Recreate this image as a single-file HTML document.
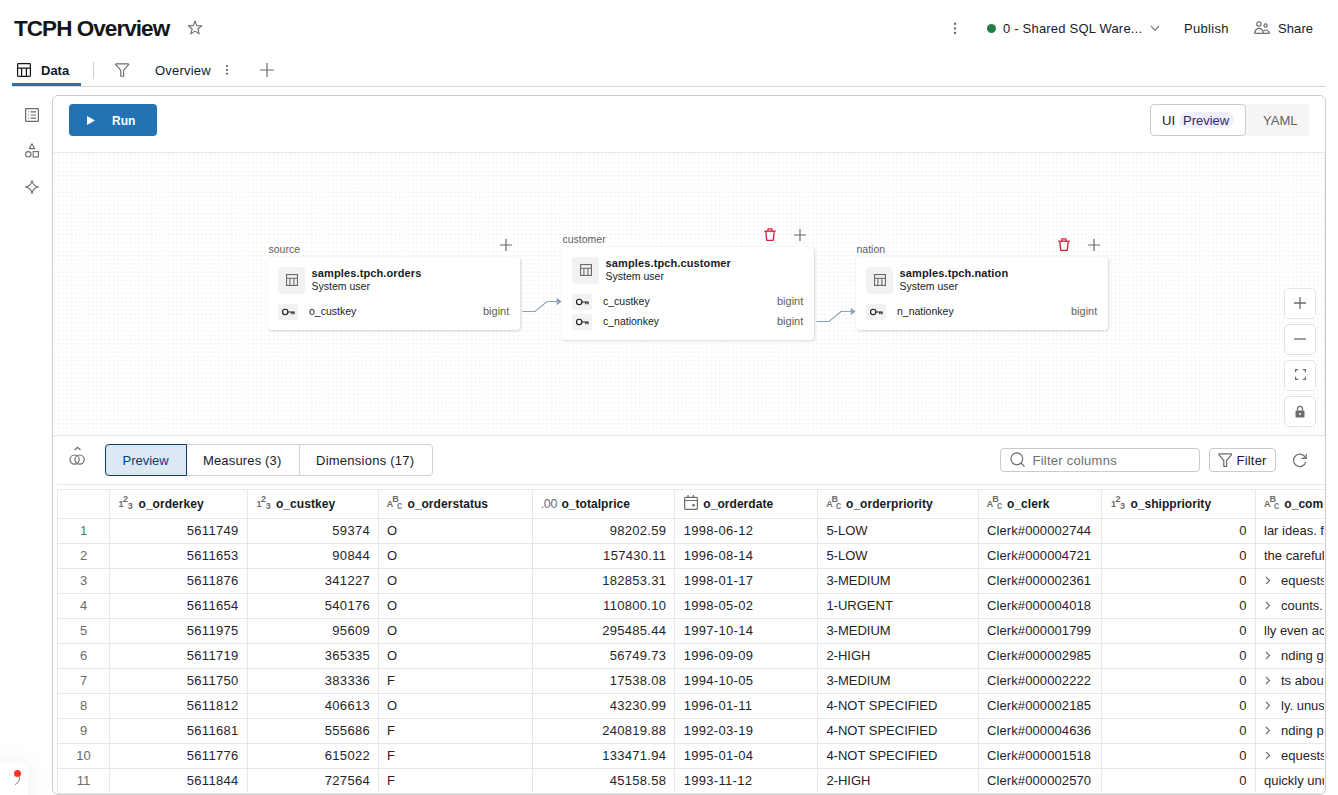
<!DOCTYPE html>
<html><head><meta charset="utf-8">
<style>
*{box-sizing:border-box;margin:0;padding:0}
html,body{width:1338px;height:795px;overflow:hidden;background:#fff;font-family:"Liberation Sans",sans-serif;color:#161b1f}
.a{position:absolute}
.t{position:absolute;white-space:nowrap;line-height:1}
svg{position:absolute;overflow:visible}
.node{position:absolute;width:252px;background:#fff;border-radius:3px;box-shadow:1px 1px 3px rgba(0,0,0,0.16),0 0 1px rgba(0,0,0,0.10)}
.ibox{position:absolute;background:#f1f2f3;border-radius:4px}
.zb{position:absolute;left:1284px;width:32px;height:31px;background:#fff;border:1px solid #e4e4e4;border-radius:5px}
</style></head><body>
<div class="t" style="left:14.00px;top:17.55px;font-size:22.5px;font-weight:bold;color:#161616;letter-spacing:-0.95px">TCPH Overview</div>
<svg style="left:187px;top:20px" width="16" height="15" viewBox="0 0 16 15"><path d="M8.00 1.00 L9.76 5.67 L14.75 5.91 L10.85 9.03 L12.17 13.84 L8.00 11.10 L3.83 13.84 L5.15 9.03 L1.25 5.91 L6.24 5.67 Z" fill="none" stroke="#6b6b6b" stroke-width="1.1" stroke-linejoin="round"/></svg>
<svg style="left:953px;top:22px" width="4" height="13"><circle cx="2" cy="1.8" r="1.2" fill="#6b6b6b"/><circle cx="2" cy="6.4" r="1.2" fill="#6b6b6b"/><circle cx="2" cy="11" r="1.2" fill="#6b6b6b"/></svg>
<div class="a" style="left:986.5px;top:23.5px;width:9px;height:9px;border-radius:50%;background:#277c43"></div>
<div class="t" style="left:1003.00px;top:22.00px;font-size:13px;font-weight:normal;color:#161b1f;letter-spacing:0.2px">0 - Shared SQL Ware...</div>
<svg style="left:1150px;top:25px" width="10" height="7" viewBox="0 0 10 7"><path d="M1 1.2 L5 5.2 L9 1.2" fill="none" stroke="#6b6b6b" stroke-width="1.1"/></svg>
<div class="t" style="left:1184.00px;top:22.00px;font-size:13px;font-weight:normal;color:#161b1f;letter-spacing:0.3px">Publish</div>
<svg style="left:1254px;top:21px" width="16" height="14" viewBox="0 0 16 14"><circle cx="4.9" cy="2.9" r="2.2" fill="none" stroke="#6b6b6b" stroke-width="1.15"/><circle cx="11.6" cy="4.5" r="1.6" fill="none" stroke="#6b6b6b" stroke-width="1.15"/><path d="M1.2 12.3 Q0.3 12.3 0.7 11.2 C1.5 8.9 3.2 7.4 5 7.4 C6.8 7.4 8.5 8.9 9.3 11.2 Q9.7 12.3 8.8 12.3 Z" fill="none" stroke="#6b6b6b" stroke-width="1.15" stroke-linejoin="round"/><path d="M9.4 12.3 H14.8 Q15.7 12.3 15.3 11.4 C14.6 9.9 13.4 9 12 9 C11 9 10.2 9.4 9.5 10.1" fill="none" stroke="#6b6b6b" stroke-width="1.15" stroke-linejoin="round"/></svg>
<div class="t" style="left:1278.00px;top:22.00px;font-size:13px;font-weight:normal;color:#161b1f;letter-spacing:0.1px">Share</div>
<svg style="left:17px;top:63px" width="14" height="14" viewBox="0 0 14 14"><rect x="0.6" y="0.6" width="12.8" height="12.8" rx="0.8" fill="none" stroke="#161616" stroke-width="1.2"/><path d="M0.6 5.1 H13.4 M4.6 5.1 V13.4 M9.4 5.1 V13.4" stroke="#161616" stroke-width="1.25"/></svg>
<div class="t" style="left:41.00px;top:64.00px;font-size:13px;font-weight:bold;color:#161616;">Data</div>
<div class="a" style="left:12px;top:83px;width:69px;height:3px;background:#2272b4"></div>
<div class="a" style="left:12px;top:86px;width:1314px;height:1px;background:#d6d6d6"></div>
<div class="a" style="left:93px;top:62px;width:1px;height:17px;background:#cfcfcf"></div>
<svg style="left:115px;top:63px" width="15" height="14" viewBox="0 0 15 14"><path d="M1.2 0.9 H13 Q14 0.9 13.4 1.9 L8.6 7.3 V13.2 H5.8 V7.3 L1 1.9 Q0.3 0.9 1.2 0.9 Z" fill="none" stroke="#6b6b6b" stroke-width="1.15" stroke-linejoin="round"/></svg>
<div class="t" style="left:155.00px;top:64.00px;font-size:13px;font-weight:normal;color:#161b1f;letter-spacing:0.2px">Overview</div>
<svg style="left:225px;top:64px" width="4" height="12"><circle cx="2" cy="2" r="1.05" fill="#5f5f5f"/><circle cx="2" cy="5.9" r="1.05" fill="#5f5f5f"/><circle cx="2" cy="9.8" r="1.05" fill="#5f5f5f"/></svg>
<svg style="left:260px;top:63px" width="14" height="14" viewBox="0 0 14 14"><path d="M7 0 V14 M0 7 H14" stroke="#6b6b6b" stroke-width="1.2"/></svg>
<svg style="left:25px;top:108px" width="14" height="14" viewBox="0 0 14 14"><rect x="0.6" y="0.6" width="12.8" height="12.8" rx="0.6" fill="none" stroke="#6b6b6b" stroke-width="1.2"/><path d="M5.5 3.8 H11 M5.5 7 H11 M5.5 10.2 H11" stroke="#6b6b6b" stroke-width="1.2"/><path d="M3 3.8 H3.8 M3 7 H3.8 M3 10.2 H3.8" stroke="#6b6b6b" stroke-width="1"/></svg>
<svg style="left:25px;top:143px" width="14" height="15" viewBox="0 0 14 15"><path d="M7 0.8 L9.7 5.6 H4.3 Z" fill="none" stroke="#6b6b6b" stroke-width="1.1" stroke-linejoin="round"/><circle cx="3.3" cy="11.3" r="2.7" fill="none" stroke="#6b6b6b" stroke-width="1.1"/><rect x="8.2" y="8.6" width="5.2" height="5.4" fill="none" stroke="#6b6b6b" stroke-width="1.1"/></svg>
<svg style="left:25.2px;top:180px" width="14" height="14" viewBox="0 0 14 14"><path d="M7 0.6 Q8 6 13.4 7 Q8 8 7 13.4 Q6 8 0.6 7 Q6 6 7 0.6 Z" fill="none" stroke="#6b6b6b" stroke-width="1.1" stroke-linejoin="round"/></svg>
<div class="a" style="left:52px;top:95px;width:1274px;height:700px;border:1px solid #cdcdcd;border-radius:6px"></div>
<div class="a" style="left:69px;top:104px;width:88px;height:32px;background:#2272b4;border-radius:4px"></div>
<svg style="left:87px;top:116px" width="8" height="9" viewBox="0 0 8 9"><path d="M0 0 L8 4.5 L0 9 Z" fill="#fff"/></svg>
<div class="t" style="left:112.00px;top:115.24px;font-size:12px;font-weight:bold;color:#fff;">Run</div>
<div class="a" style="left:1150px;top:104px;width:159px;height:32px;background:#f5f5f5;border-radius:4px"></div>
<div class="a" style="left:1150px;top:104px;width:96px;height:32px;background:#fff;border:1px solid #cbcbcb;border-radius:4px"></div>
<div class="t" style="left:1162.00px;top:114.00px;font-size:13px;font-weight:normal;color:#161b1f;">UI</div>
<div class="a" style="left:1179px;top:112px;width:55px;height:16px;background:#f2effc;border-radius:8px"></div>
<div class="t" style="left:1183.00px;top:114.00px;font-size:13px;font-weight:normal;color:#2f2a6b;">Preview</div>
<div class="t" style="left:1263.00px;top:114.00px;font-size:13px;font-weight:normal;color:#626262;">YAML</div>
<div class="a" style="left:53px;top:152px;width:1272px;height:1px;background:#e3e8ed"></div>
<svg style="left:53px;top:153px" width="1271" height="282"><defs><pattern id="dp" x="1.17" y="1.08" width="4.21" height="4.205" patternUnits="userSpaceOnUse"><rect x="0" y="0" width="1" height="1" fill="#e3e3e3"/></pattern></defs><rect width="1271" height="282" fill="url(#dp)"/></svg>
<div class="a" style="left:53px;top:435px;width:1272px;height:1px;background:#e3e8ed"></div>
<div class="a" style="left:1324px;top:153px;width:1px;height:282px;background:#edf0f3"></div>
<div class="t" style="left:268.50px;top:243.61px;font-size:10.5px;font-weight:normal;color:#5e5e5e;">source</div>
<svg style="left:500px;top:239px" width="12" height="12" viewBox="0 0 12 12"><path d="M6 0 V12 M0 6 H12" stroke="#6b6b6b" stroke-width="1.2"/></svg>
<div class="node" style="left:268px;top:257px;height:73px"></div>
<div class="a" style="left:278px;top:267px;width:27px;height:26.5px;background:#f2f2f4;border-radius:4px"></div>
<svg style="left:286px;top:274px" width="12" height="12" viewBox="0 0 12 12"><rect x="0.55" y="0.55" width="10.9" height="10.9" fill="none" stroke="#6b6b6b" stroke-width="1.1"/><path d="M0.55 4.3 H11.45 M3.9 4.3 V11.45 M7.9 4.3 V11.45" stroke="#6b6b6b" stroke-width="1.1"/></svg>
<div class="t" style="left:311.60px;top:267.69px;font-size:11px;font-weight:bold;color:#161b1f;letter-spacing:0.12px">samples.tpch.orders</div>
<div class="t" style="left:311.60px;top:281.11px;font-size:10.5px;font-weight:normal;color:#161b1f;">System user</div>
<div class="a" style="left:278.2px;top:304px;width:19.8px;height:16px;background:#f2f2f4;border-radius:3px"></div>
<svg style="left:281.5px;top:308px" width="14" height="8" viewBox="0 0 14 8"><circle cx="3.2" cy="4" r="2.7" fill="none" stroke="#1f1f1f" stroke-width="1.1"/><path d="M5.9 4 H12.6 M9.9 4 V6.3 M12 4 V6.3" stroke="#1f1f1f" stroke-width="1.2"/></svg>
<div class="t" style="left:309.00px;top:306.11px;font-size:10.5px;font-weight:normal;color:#161b1f;">o_custkey</div>
<div class="t" style="left:109.30px;width:400px;text-align:right;top:305.69px;font-size:11px;font-weight:normal;color:#5e5e5e;">bigint</div>
<div class="t" style="left:562.50px;top:233.61px;font-size:10.5px;font-weight:normal;color:#5e5e5e;">customer</div>
<svg style="left:764px;top:228px" width="12" height="13" viewBox="0 0 12 13"><path d="M0.3 3.2 H11.7" stroke="#d4213d" stroke-width="1.3"/><path d="M4 3.2 V0.8 H8 V3.2" fill="none" stroke="#d4213d" stroke-width="1.3" stroke-linejoin="round"/><path d="M1.7 3.2 L2.8 12.4 H9.2 L10.3 3.2" fill="none" stroke="#d4213d" stroke-width="1.3" stroke-linejoin="round"/></svg>
<svg style="left:794px;top:229px" width="12" height="12" viewBox="0 0 12 12"><path d="M6 0 V12 M0 6 H12" stroke="#6b6b6b" stroke-width="1.2"/></svg>
<div class="node" style="left:562px;top:247px;height:93px"></div>
<div class="a" style="left:572px;top:257px;width:27px;height:26.5px;background:#f2f2f4;border-radius:4px"></div>
<svg style="left:580px;top:264px" width="12" height="12" viewBox="0 0 12 12"><rect x="0.55" y="0.55" width="10.9" height="10.9" fill="none" stroke="#6b6b6b" stroke-width="1.1"/><path d="M0.55 4.3 H11.45 M3.9 4.3 V11.45 M7.9 4.3 V11.45" stroke="#6b6b6b" stroke-width="1.1"/></svg>
<div class="t" style="left:605.60px;top:257.69px;font-size:11px;font-weight:bold;color:#161b1f;letter-spacing:0.12px">samples.tpch.customer</div>
<div class="t" style="left:605.60px;top:271.11px;font-size:10.5px;font-weight:normal;color:#161b1f;">System user</div>
<div class="a" style="left:572.2px;top:294px;width:19.8px;height:16px;background:#f2f2f4;border-radius:3px"></div>
<svg style="left:575.5px;top:298px" width="14" height="8" viewBox="0 0 14 8"><circle cx="3.2" cy="4" r="2.7" fill="none" stroke="#1f1f1f" stroke-width="1.1"/><path d="M5.9 4 H12.6 M9.9 4 V6.3 M12 4 V6.3" stroke="#1f1f1f" stroke-width="1.2"/></svg>
<div class="t" style="left:603.00px;top:296.11px;font-size:10.5px;font-weight:normal;color:#161b1f;">c_custkey</div>
<div class="t" style="left:403.30px;width:400px;text-align:right;top:295.69px;font-size:11px;font-weight:normal;color:#5e5e5e;">bigint</div>
<div class="a" style="left:572.2px;top:314px;width:19.8px;height:16px;background:#f2f2f4;border-radius:3px"></div>
<svg style="left:575.5px;top:318px" width="14" height="8" viewBox="0 0 14 8"><circle cx="3.2" cy="4" r="2.7" fill="none" stroke="#1f1f1f" stroke-width="1.1"/><path d="M5.9 4 H12.6 M9.9 4 V6.3 M12 4 V6.3" stroke="#1f1f1f" stroke-width="1.2"/></svg>
<div class="t" style="left:603.00px;top:316.11px;font-size:10.5px;font-weight:normal;color:#161b1f;">c_nationkey</div>
<div class="t" style="left:403.30px;width:400px;text-align:right;top:315.69px;font-size:11px;font-weight:normal;color:#5e5e5e;">bigint</div>
<div class="t" style="left:856.50px;top:243.61px;font-size:10.5px;font-weight:normal;color:#5e5e5e;">nation</div>
<svg style="left:1058px;top:238px" width="12" height="13" viewBox="0 0 12 13"><path d="M0.3 3.2 H11.7" stroke="#d4213d" stroke-width="1.3"/><path d="M4 3.2 V0.8 H8 V3.2" fill="none" stroke="#d4213d" stroke-width="1.3" stroke-linejoin="round"/><path d="M1.7 3.2 L2.8 12.4 H9.2 L10.3 3.2" fill="none" stroke="#d4213d" stroke-width="1.3" stroke-linejoin="round"/></svg>
<svg style="left:1088px;top:239px" width="12" height="12" viewBox="0 0 12 12"><path d="M6 0 V12 M0 6 H12" stroke="#6b6b6b" stroke-width="1.2"/></svg>
<div class="node" style="left:856px;top:257px;height:73px"></div>
<div class="a" style="left:866px;top:267px;width:27px;height:26.5px;background:#f2f2f4;border-radius:4px"></div>
<svg style="left:874px;top:274px" width="12" height="12" viewBox="0 0 12 12"><rect x="0.55" y="0.55" width="10.9" height="10.9" fill="none" stroke="#6b6b6b" stroke-width="1.1"/><path d="M0.55 4.3 H11.45 M3.9 4.3 V11.45 M7.9 4.3 V11.45" stroke="#6b6b6b" stroke-width="1.1"/></svg>
<div class="t" style="left:899.60px;top:267.69px;font-size:11px;font-weight:bold;color:#161b1f;letter-spacing:0.12px">samples.tpch.nation</div>
<div class="t" style="left:899.60px;top:281.11px;font-size:10.5px;font-weight:normal;color:#161b1f;">System user</div>
<div class="a" style="left:866.2px;top:304px;width:19.8px;height:16px;background:#f2f2f4;border-radius:3px"></div>
<svg style="left:869.5px;top:308px" width="14" height="8" viewBox="0 0 14 8"><circle cx="3.2" cy="4" r="2.7" fill="none" stroke="#1f1f1f" stroke-width="1.1"/><path d="M5.9 4 H12.6 M9.9 4 V6.3 M12 4 V6.3" stroke="#1f1f1f" stroke-width="1.2"/></svg>
<div class="t" style="left:897.00px;top:306.11px;font-size:10.5px;font-weight:normal;color:#161b1f;">n_nationkey</div>
<div class="t" style="left:697.30px;width:400px;text-align:right;top:305.69px;font-size:11px;font-weight:normal;color:#5e5e5e;">bigint</div>
<svg style="left:0;top:0" width="1338" height="795"><path d="M522.5 311.5 H535 L547 301.5 H558" fill="none" stroke="#8aa1b6" stroke-width="1.1"/><path d="M556.8 297.8 L561.6 301.5 L556.8 305.2 Z" fill="#8aa1b6"/><path d="M816.5 321.5 H829 L841 311.5 H852" fill="none" stroke="#8aa1b6" stroke-width="1.1"/><path d="M850.8 307.8 L855.6 311.5 L850.8 315.2 Z" fill="#8aa1b6"/></svg>
<div class="a" style="left:1284px;top:287.5px;width:32px;height:31px;background:#fff;border:1px solid #e4e4e4;border-radius:5px"></div>
<div class="a" style="left:1284px;top:323.5px;width:32px;height:31px;background:#fff;border:1px solid #e4e4e4;border-radius:5px"></div>
<div class="a" style="left:1284px;top:359.5px;width:32px;height:31px;background:#fff;border:1px solid #e4e4e4;border-radius:5px"></div>
<div class="a" style="left:1284px;top:395.5px;width:32px;height:31px;background:#fff;border:1px solid #e4e4e4;border-radius:5px"></div>
<svg style="left:1294px;top:297px" width="12" height="12" viewBox="0 0 12 12"><path d="M6 0 V12 M0 6 H12" stroke="#6b6b6b" stroke-width="1.3"/></svg>
<svg style="left:1294px;top:333px" width="12" height="12" viewBox="0 0 12 12"><path d="M0 6 H12" stroke="#6b6b6b" stroke-width="1.3"/></svg>
<svg style="left:1294.5px;top:369px" width="11" height="11" viewBox="0 0 11 11"><path d="M0.6 3.2 V0.6 H3.2 M7.8 0.6 H10.4 V3.2 M10.4 7.8 V10.4 H7.8 M3.2 10.4 H0.6 V7.8" fill="none" stroke="#6b6b6b" stroke-width="1.2"/></svg>
<svg style="left:1295px;top:404.5px" width="10" height="13" viewBox="0 0 10 13"><path d="M2.5 5.5 V3.8 A2.5 2.5 0 0 1 7.5 3.8 V5.5" fill="none" stroke="#6b6b6b" stroke-width="1.2"/><rect x="0.5" y="5.5" width="9" height="7" rx="1" fill="#6b6b6b"/><rect x="4.2" y="8" width="1.6" height="2" fill="#fff"/></svg>
<svg style="left:69px;top:446px" width="17" height="20" viewBox="0 0 17 20"><path d="M5.5 4 L8.5 1.2 L11.5 4" fill="none" stroke="#6b6b6b" stroke-width="1.2"/><circle cx="5.6" cy="13.6" r="4.6" fill="none" stroke="#6b6b6b" stroke-width="1.2"/><circle cx="10.6" cy="13.6" r="4.6" fill="none" stroke="#6b6b6b" stroke-width="1.2"/></svg>
<div class="a" style="left:105px;top:444px;width:328px;height:32px;border:1px solid #d1d1d1;border-radius:4px"></div>
<div class="a" style="left:299px;top:444px;width:1px;height:32px;background:#d1d1d1"></div>
<div class="a" style="left:105px;top:444px;width:82px;height:32px;background:#dce8f3;border:1px solid #0e3d6e;border-radius:4px 0 0 4px"></div>
<div class="t" style="left:122.50px;top:454.00px;font-size:13px;font-weight:normal;color:#0e3d6e;">Preview</div>
<div class="t" style="left:203.00px;top:454.00px;font-size:13px;font-weight:normal;color:#161b1f;letter-spacing:0.15px">Measures (3)</div>
<div class="t" style="left:316.00px;top:454.00px;font-size:13px;font-weight:normal;color:#161b1f;letter-spacing:0.25px">Dimensions (17)</div>
<div class="a" style="left:1000px;top:448px;width:200px;height:24px;border:1px solid #cbcbcb;border-radius:4px"></div>
<svg style="left:1010px;top:452px" width="16" height="16" viewBox="0 0 16 16"><circle cx="6.8" cy="6.8" r="5.9" fill="none" stroke="#6b6b6b" stroke-width="1.2"/><path d="M11 11 L14.6 14.6" stroke="#6b6b6b" stroke-width="1.2"/></svg>
<div class="t" style="left:1032.50px;top:454.00px;font-size:13px;font-weight:normal;color:#6f6f6f;letter-spacing:0.25px">Filter columns</div>
<div class="a" style="left:1208.5px;top:448px;width:67px;height:24px;border:1px solid #cbcbcb;border-radius:4px"></div>
<svg style="left:1217.5px;top:452.5px" width="15" height="14" viewBox="0 0 15 14"><path d="M1.2 0.9 H13 Q14 0.9 13.4 1.9 L8.6 7.3 V13.3 H5.8 V7.3 L1 1.9 Q0.3 0.9 1.2 0.9 Z" fill="none" stroke="#6b6b6b" stroke-width="1.2" stroke-linejoin="round"/></svg>
<div class="t" style="left:1236.50px;top:454.00px;font-size:13px;font-weight:normal;color:#161b1f;letter-spacing:0.2px">Filter</div>
<svg style="left:1292px;top:452px" width="16" height="16" viewBox="0 0 16 16"><path d="M13.6 6.2 A6.2 6.2 0 1 0 13.8 9.8" fill="none" stroke="#6b6b6b" stroke-width="1.2"/><path d="M14.2 1.8 V6.4 H9.6" fill="none" stroke="#6b6b6b" stroke-width="1.2"/></svg>
<div class="a" style="left:57px;top:484px;width:1268px;height:1px;background:#e3e8ed"></div>
<div class="a" style="left:53px;top:486px;width:1271px;height:308px;overflow:hidden;border-radius:0 0 5px 5px">
<div class="a" style="left:4px;top:3px;width:1px;height:400px;background:#e8e8e8"></div>
<div class="a" style="left:56px;top:3px;width:1px;height:400px;background:#e8e8e8"></div>
<div class="a" style="left:194px;top:3px;width:1px;height:400px;background:#e8e8e8"></div>
<div class="a" style="left:325px;top:3px;width:1px;height:400px;background:#e8e8e8"></div>
<div class="a" style="left:479px;top:3px;width:1px;height:400px;background:#e8e8e8"></div>
<div class="a" style="left:621px;top:3px;width:1px;height:400px;background:#e8e8e8"></div>
<div class="a" style="left:764px;top:3px;width:1px;height:400px;background:#e8e8e8"></div>
<div class="a" style="left:925px;top:3px;width:1px;height:400px;background:#e8e8e8"></div>
<div class="a" style="left:1048px;top:3px;width:1px;height:400px;background:#e8e8e8"></div>
<div class="a" style="left:1202px;top:3px;width:1px;height:400px;background:#e8e8e8"></div>
<div class="a" style="left:4px;top:3px;width:1400px;height:1px;background:#e8e8e8"></div>
<div class="a" style="left:4px;top:32px;width:1400px;height:1px;background:#e8e8e8"></div>
<div class="a" style="left:4px;top:57px;width:1400px;height:1px;background:#e8e8e8"></div>
<div class="a" style="left:4px;top:82px;width:1400px;height:1px;background:#e8e8e8"></div>
<div class="a" style="left:4px;top:107px;width:1400px;height:1px;background:#e8e8e8"></div>
<div class="a" style="left:4px;top:132px;width:1400px;height:1px;background:#e8e8e8"></div>
<div class="a" style="left:4px;top:157px;width:1400px;height:1px;background:#e8e8e8"></div>
<div class="a" style="left:4px;top:182px;width:1400px;height:1px;background:#e8e8e8"></div>
<div class="a" style="left:4px;top:207px;width:1400px;height:1px;background:#e8e8e8"></div>
<div class="a" style="left:4px;top:232px;width:1400px;height:1px;background:#e8e8e8"></div>
<div class="a" style="left:4px;top:257px;width:1400px;height:1px;background:#e8e8e8"></div>
<div class="a" style="left:4px;top:282px;width:1400px;height:1px;background:#e8e8e8"></div>
<div class="a" style="left:4px;top:307px;width:1400px;height:1px;background:#e8e8e8"></div>
<div class="t" style="left:65.60px;top:14.18px;font-size:9px;font-weight:bold;color:#6b6b6b;">1</div>
<div class="t" style="left:70.10px;top:9.18px;font-size:9px;font-weight:bold;color:#6b6b6b;">2</div>
<div class="t" style="left:74.70px;top:15.98px;font-size:9px;font-weight:bold;color:#6b6b6b;">3</div>
<div class="t" style="left:85.50px;top:11.84px;font-size:12px;font-weight:bold;color:#161b1f;letter-spacing:0.05px">o_orderkey</div>
<div class="t" style="left:203.60px;top:14.18px;font-size:9px;font-weight:bold;color:#6b6b6b;">1</div>
<div class="t" style="left:208.10px;top:9.18px;font-size:9px;font-weight:bold;color:#6b6b6b;">2</div>
<div class="t" style="left:212.70px;top:15.98px;font-size:9px;font-weight:bold;color:#6b6b6b;">3</div>
<div class="t" style="left:223.00px;top:11.84px;font-size:12px;font-weight:bold;color:#161b1f;letter-spacing:0.05px">o_custkey</div>
<div class="t" style="left:333.80px;top:14.28px;font-size:9px;font-weight:bold;color:#6b6b6b;">A</div>
<div class="t" style="left:339.20px;top:9.18px;font-size:9px;font-weight:bold;color:#6b6b6b;">B</div>
<div class="t" style="left:343.80px;top:16.08px;font-size:9px;font-weight:bold;color:#6b6b6b;"><span style="display:inline-block;transform:scaleX(0.8);transform-origin:0 0">C</span></div>
<div class="t" style="left:354.40px;top:11.84px;font-size:12px;font-weight:bold;color:#161b1f;letter-spacing:0.05px">o_orderstatus</div>
<div class="t" style="left:487.80px;top:11.92px;font-size:12.5px;font-weight:normal;color:#6b6b6b;letter-spacing:-0.4px">.00</div>
<div class="t" style="left:508.40px;top:11.84px;font-size:12px;font-weight:bold;color:#161b1f;letter-spacing:0.05px">o_totalprice</div>
<svg style="left:631px;top:9px" width="14" height="15" viewBox="0 0 14 15"><rect x="0.6" y="2.3" width="12.8" height="12.1" rx="1" fill="none" stroke="#6b6b6b" stroke-width="1.2"/><path d="M0.6 5.5 H13.4 M4 0 V2.6 M9.5 0 V2.6" stroke="#6b6b6b" stroke-width="1.2"/><circle cx="9.5" cy="10.2" r="1.3" fill="#6b6b6b"/></svg>
<div class="t" style="left:650.30px;top:11.84px;font-size:12px;font-weight:bold;color:#161b1f;letter-spacing:0.05px">o_orderdate</div>
<div class="t" style="left:773.20px;top:14.28px;font-size:9px;font-weight:bold;color:#6b6b6b;">A</div>
<div class="t" style="left:778.60px;top:9.18px;font-size:9px;font-weight:bold;color:#6b6b6b;">B</div>
<div class="t" style="left:783.20px;top:16.08px;font-size:9px;font-weight:bold;color:#6b6b6b;"><span style="display:inline-block;transform:scaleX(0.8);transform-origin:0 0">C</span></div>
<div class="t" style="left:793.00px;top:11.84px;font-size:12px;font-weight:bold;color:#161b1f;letter-spacing:0.05px">o_orderpriority</div>
<div class="t" style="left:933.80px;top:14.28px;font-size:9px;font-weight:bold;color:#6b6b6b;">A</div>
<div class="t" style="left:939.20px;top:9.18px;font-size:9px;font-weight:bold;color:#6b6b6b;">B</div>
<div class="t" style="left:943.80px;top:16.08px;font-size:9px;font-weight:bold;color:#6b6b6b;"><span style="display:inline-block;transform:scaleX(0.8);transform-origin:0 0">C</span></div>
<div class="t" style="left:954.00px;top:11.84px;font-size:12px;font-weight:bold;color:#161b1f;letter-spacing:0.05px">o_clerk</div>
<div class="t" style="left:1057.90px;top:14.18px;font-size:9px;font-weight:bold;color:#6b6b6b;">1</div>
<div class="t" style="left:1062.40px;top:9.18px;font-size:9px;font-weight:bold;color:#6b6b6b;">2</div>
<div class="t" style="left:1067.00px;top:15.98px;font-size:9px;font-weight:bold;color:#6b6b6b;">3</div>
<div class="t" style="left:1077.40px;top:11.84px;font-size:12px;font-weight:bold;color:#161b1f;letter-spacing:0.05px">o_shippriority</div>
<div class="t" style="left:1211.00px;top:14.28px;font-size:9px;font-weight:bold;color:#6b6b6b;">A</div>
<div class="t" style="left:1216.40px;top:9.18px;font-size:9px;font-weight:bold;color:#6b6b6b;">B</div>
<div class="t" style="left:1221.00px;top:16.08px;font-size:9px;font-weight:bold;color:#6b6b6b;"><span style="display:inline-block;transform:scaleX(0.8);transform-origin:0 0">C</span></div>
<div class="t" style="left:1231.30px;top:11.84px;font-size:12px;font-weight:bold;color:#161b1f;letter-spacing:0.05px">o_comment</div>
<div class="t" style="left:-169.50px;width:400px;text-align:center;top:38.00px;font-size:13px;font-weight:normal;color:#6b6b6b;">1</div>
<div class="t" style="left:-214.50px;width:400px;text-align:right;top:38.00px;font-size:13px;font-weight:normal;color:#1f2429;letter-spacing:0.3px">5611749</div>
<div class="t" style="left:-83.00px;width:400px;text-align:right;top:38.00px;font-size:13px;font-weight:normal;color:#1f2429;letter-spacing:0.3px">59374</div>
<div class="t" style="left:334.00px;top:38.00px;font-size:13px;font-weight:normal;color:#1f2429;">O</div>
<div class="t" style="left:213.30px;width:400px;text-align:right;top:38.00px;font-size:13px;font-weight:normal;color:#1f2429;letter-spacing:0.3px">98202.59</div>
<div class="t" style="left:630.70px;top:38.00px;font-size:13px;font-weight:normal;color:#1f2429;letter-spacing:0.3px">1998-06-12</div>
<div class="t" style="left:773.40px;top:38.00px;font-size:13px;font-weight:normal;color:#1f2429;">5-LOW</div>
<div class="t" style="left:934.00px;top:38.00px;font-size:13px;font-weight:normal;color:#1f2429;letter-spacing:0.1px">Clerk#000002744</div>
<div class="t" style="left:793.60px;width:400px;text-align:right;top:38.00px;font-size:13px;font-weight:normal;color:#1f2429;">0</div>
<div class="t" style="left:1211.00px;top:38.00px;font-size:13px;font-weight:normal;color:#1f2429;">lar ideas. furiously</div>
<div class="t" style="left:-169.50px;width:400px;text-align:center;top:63.00px;font-size:13px;font-weight:normal;color:#6b6b6b;">2</div>
<div class="t" style="left:-214.50px;width:400px;text-align:right;top:63.00px;font-size:13px;font-weight:normal;color:#1f2429;letter-spacing:0.3px">5611653</div>
<div class="t" style="left:-83.00px;width:400px;text-align:right;top:63.00px;font-size:13px;font-weight:normal;color:#1f2429;letter-spacing:0.3px">90844</div>
<div class="t" style="left:334.00px;top:63.00px;font-size:13px;font-weight:normal;color:#1f2429;">O</div>
<div class="t" style="left:213.30px;width:400px;text-align:right;top:63.00px;font-size:13px;font-weight:normal;color:#1f2429;letter-spacing:0.3px">157430.11</div>
<div class="t" style="left:630.70px;top:63.00px;font-size:13px;font-weight:normal;color:#1f2429;letter-spacing:0.3px">1996-08-14</div>
<div class="t" style="left:773.40px;top:63.00px;font-size:13px;font-weight:normal;color:#1f2429;">5-LOW</div>
<div class="t" style="left:934.00px;top:63.00px;font-size:13px;font-weight:normal;color:#1f2429;letter-spacing:0.1px">Clerk#000004721</div>
<div class="t" style="left:793.60px;width:400px;text-align:right;top:63.00px;font-size:13px;font-weight:normal;color:#1f2429;">0</div>
<div class="t" style="left:1211.00px;top:63.00px;font-size:13px;font-weight:normal;color:#1f2429;">the carefully</div>
<div class="t" style="left:-169.50px;width:400px;text-align:center;top:88.00px;font-size:13px;font-weight:normal;color:#6b6b6b;">3</div>
<div class="t" style="left:-214.50px;width:400px;text-align:right;top:88.00px;font-size:13px;font-weight:normal;color:#1f2429;letter-spacing:0.3px">5611876</div>
<div class="t" style="left:-83.00px;width:400px;text-align:right;top:88.00px;font-size:13px;font-weight:normal;color:#1f2429;letter-spacing:0.3px">341227</div>
<div class="t" style="left:334.00px;top:88.00px;font-size:13px;font-weight:normal;color:#1f2429;">O</div>
<div class="t" style="left:213.30px;width:400px;text-align:right;top:88.00px;font-size:13px;font-weight:normal;color:#1f2429;letter-spacing:0.3px">182853.31</div>
<div class="t" style="left:630.70px;top:88.00px;font-size:13px;font-weight:normal;color:#1f2429;letter-spacing:0.3px">1998-01-17</div>
<div class="t" style="left:773.40px;top:88.00px;font-size:13px;font-weight:normal;color:#1f2429;">3-MEDIUM</div>
<div class="t" style="left:934.00px;top:88.00px;font-size:13px;font-weight:normal;color:#1f2429;letter-spacing:0.1px">Clerk#000002361</div>
<div class="t" style="left:793.60px;width:400px;text-align:right;top:88.00px;font-size:13px;font-weight:normal;color:#1f2429;">0</div>
<svg style="left:1212px;top:90px" width="6" height="9" viewBox="0 0 6 9"><path d="M1 1 L4.5 4.5 L1 8" fill="none" stroke="#6b6b6b" stroke-width="1.1"/></svg>
<div class="t" style="left:1228.00px;top:88.00px;font-size:13px;font-weight:normal;color:#1f2429;">equests about</div>
<div class="t" style="left:-169.50px;width:400px;text-align:center;top:113.00px;font-size:13px;font-weight:normal;color:#6b6b6b;">4</div>
<div class="t" style="left:-214.50px;width:400px;text-align:right;top:113.00px;font-size:13px;font-weight:normal;color:#1f2429;letter-spacing:0.3px">5611654</div>
<div class="t" style="left:-83.00px;width:400px;text-align:right;top:113.00px;font-size:13px;font-weight:normal;color:#1f2429;letter-spacing:0.3px">540176</div>
<div class="t" style="left:334.00px;top:113.00px;font-size:13px;font-weight:normal;color:#1f2429;">O</div>
<div class="t" style="left:213.30px;width:400px;text-align:right;top:113.00px;font-size:13px;font-weight:normal;color:#1f2429;letter-spacing:0.3px">110800.10</div>
<div class="t" style="left:630.70px;top:113.00px;font-size:13px;font-weight:normal;color:#1f2429;letter-spacing:0.3px">1998-05-02</div>
<div class="t" style="left:773.40px;top:113.00px;font-size:13px;font-weight:normal;color:#1f2429;">1-URGENT</div>
<div class="t" style="left:934.00px;top:113.00px;font-size:13px;font-weight:normal;color:#1f2429;letter-spacing:0.1px">Clerk#000004018</div>
<div class="t" style="left:793.60px;width:400px;text-align:right;top:113.00px;font-size:13px;font-weight:normal;color:#1f2429;">0</div>
<svg style="left:1212px;top:115px" width="6" height="9" viewBox="0 0 6 9"><path d="M1 1 L4.5 4.5 L1 8" fill="none" stroke="#6b6b6b" stroke-width="1.1"/></svg>
<div class="t" style="left:1228.00px;top:113.00px;font-size:13px;font-weight:normal;color:#1f2429;">counts. ironic</div>
<div class="t" style="left:-169.50px;width:400px;text-align:center;top:138.00px;font-size:13px;font-weight:normal;color:#6b6b6b;">5</div>
<div class="t" style="left:-214.50px;width:400px;text-align:right;top:138.00px;font-size:13px;font-weight:normal;color:#1f2429;letter-spacing:0.3px">5611975</div>
<div class="t" style="left:-83.00px;width:400px;text-align:right;top:138.00px;font-size:13px;font-weight:normal;color:#1f2429;letter-spacing:0.3px">95609</div>
<div class="t" style="left:334.00px;top:138.00px;font-size:13px;font-weight:normal;color:#1f2429;">O</div>
<div class="t" style="left:213.30px;width:400px;text-align:right;top:138.00px;font-size:13px;font-weight:normal;color:#1f2429;letter-spacing:0.3px">295485.44</div>
<div class="t" style="left:630.70px;top:138.00px;font-size:13px;font-weight:normal;color:#1f2429;letter-spacing:0.3px">1997-10-14</div>
<div class="t" style="left:773.40px;top:138.00px;font-size:13px;font-weight:normal;color:#1f2429;">3-MEDIUM</div>
<div class="t" style="left:934.00px;top:138.00px;font-size:13px;font-weight:normal;color:#1f2429;letter-spacing:0.1px">Clerk#000001799</div>
<div class="t" style="left:793.60px;width:400px;text-align:right;top:138.00px;font-size:13px;font-weight:normal;color:#1f2429;">0</div>
<div class="t" style="left:1211.00px;top:138.00px;font-size:13px;font-weight:normal;color:#1f2429;">lly even accounts</div>
<div class="t" style="left:-169.50px;width:400px;text-align:center;top:163.00px;font-size:13px;font-weight:normal;color:#6b6b6b;">6</div>
<div class="t" style="left:-214.50px;width:400px;text-align:right;top:163.00px;font-size:13px;font-weight:normal;color:#1f2429;letter-spacing:0.3px">5611719</div>
<div class="t" style="left:-83.00px;width:400px;text-align:right;top:163.00px;font-size:13px;font-weight:normal;color:#1f2429;letter-spacing:0.3px">365335</div>
<div class="t" style="left:334.00px;top:163.00px;font-size:13px;font-weight:normal;color:#1f2429;">O</div>
<div class="t" style="left:213.30px;width:400px;text-align:right;top:163.00px;font-size:13px;font-weight:normal;color:#1f2429;letter-spacing:0.3px">56749.73</div>
<div class="t" style="left:630.70px;top:163.00px;font-size:13px;font-weight:normal;color:#1f2429;letter-spacing:0.3px">1996-09-09</div>
<div class="t" style="left:773.40px;top:163.00px;font-size:13px;font-weight:normal;color:#1f2429;">2-HIGH</div>
<div class="t" style="left:934.00px;top:163.00px;font-size:13px;font-weight:normal;color:#1f2429;letter-spacing:0.1px">Clerk#000002985</div>
<div class="t" style="left:793.60px;width:400px;text-align:right;top:163.00px;font-size:13px;font-weight:normal;color:#1f2429;">0</div>
<svg style="left:1212px;top:165px" width="6" height="9" viewBox="0 0 6 9"><path d="M1 1 L4.5 4.5 L1 8" fill="none" stroke="#6b6b6b" stroke-width="1.1"/></svg>
<div class="t" style="left:1228.00px;top:163.00px;font-size:13px;font-weight:normal;color:#1f2429;">nding giving</div>
<div class="t" style="left:-169.50px;width:400px;text-align:center;top:188.00px;font-size:13px;font-weight:normal;color:#6b6b6b;">7</div>
<div class="t" style="left:-214.50px;width:400px;text-align:right;top:188.00px;font-size:13px;font-weight:normal;color:#1f2429;letter-spacing:0.3px">5611750</div>
<div class="t" style="left:-83.00px;width:400px;text-align:right;top:188.00px;font-size:13px;font-weight:normal;color:#1f2429;letter-spacing:0.3px">383336</div>
<div class="t" style="left:334.00px;top:188.00px;font-size:13px;font-weight:normal;color:#1f2429;">F</div>
<div class="t" style="left:213.30px;width:400px;text-align:right;top:188.00px;font-size:13px;font-weight:normal;color:#1f2429;letter-spacing:0.3px">17538.08</div>
<div class="t" style="left:630.70px;top:188.00px;font-size:13px;font-weight:normal;color:#1f2429;letter-spacing:0.3px">1994-10-05</div>
<div class="t" style="left:773.40px;top:188.00px;font-size:13px;font-weight:normal;color:#1f2429;">3-MEDIUM</div>
<div class="t" style="left:934.00px;top:188.00px;font-size:13px;font-weight:normal;color:#1f2429;letter-spacing:0.1px">Clerk#000002222</div>
<div class="t" style="left:793.60px;width:400px;text-align:right;top:188.00px;font-size:13px;font-weight:normal;color:#1f2429;">0</div>
<svg style="left:1212px;top:190px" width="6" height="9" viewBox="0 0 6 9"><path d="M1 1 L4.5 4.5 L1 8" fill="none" stroke="#6b6b6b" stroke-width="1.1"/></svg>
<div class="t" style="left:1228.00px;top:188.00px;font-size:13px;font-weight:normal;color:#1f2429;">ts about the</div>
<div class="t" style="left:-169.50px;width:400px;text-align:center;top:213.00px;font-size:13px;font-weight:normal;color:#6b6b6b;">8</div>
<div class="t" style="left:-214.50px;width:400px;text-align:right;top:213.00px;font-size:13px;font-weight:normal;color:#1f2429;letter-spacing:0.3px">5611812</div>
<div class="t" style="left:-83.00px;width:400px;text-align:right;top:213.00px;font-size:13px;font-weight:normal;color:#1f2429;letter-spacing:0.3px">406613</div>
<div class="t" style="left:334.00px;top:213.00px;font-size:13px;font-weight:normal;color:#1f2429;">O</div>
<div class="t" style="left:213.30px;width:400px;text-align:right;top:213.00px;font-size:13px;font-weight:normal;color:#1f2429;letter-spacing:0.3px">43230.99</div>
<div class="t" style="left:630.70px;top:213.00px;font-size:13px;font-weight:normal;color:#1f2429;letter-spacing:0.3px">1996-01-11</div>
<div class="t" style="left:773.40px;top:213.00px;font-size:13px;font-weight:normal;color:#1f2429;">4-NOT SPECIFIED</div>
<div class="t" style="left:934.00px;top:213.00px;font-size:13px;font-weight:normal;color:#1f2429;letter-spacing:0.1px">Clerk#000002185</div>
<div class="t" style="left:793.60px;width:400px;text-align:right;top:213.00px;font-size:13px;font-weight:normal;color:#1f2429;">0</div>
<svg style="left:1212px;top:215px" width="6" height="9" viewBox="0 0 6 9"><path d="M1 1 L4.5 4.5 L1 8" fill="none" stroke="#6b6b6b" stroke-width="1.1"/></svg>
<div class="t" style="left:1228.00px;top:213.00px;font-size:13px;font-weight:normal;color:#1f2429;">ly. unusual</div>
<div class="t" style="left:-169.50px;width:400px;text-align:center;top:238.00px;font-size:13px;font-weight:normal;color:#6b6b6b;">9</div>
<div class="t" style="left:-214.50px;width:400px;text-align:right;top:238.00px;font-size:13px;font-weight:normal;color:#1f2429;letter-spacing:0.3px">5611681</div>
<div class="t" style="left:-83.00px;width:400px;text-align:right;top:238.00px;font-size:13px;font-weight:normal;color:#1f2429;letter-spacing:0.3px">555686</div>
<div class="t" style="left:334.00px;top:238.00px;font-size:13px;font-weight:normal;color:#1f2429;">F</div>
<div class="t" style="left:213.30px;width:400px;text-align:right;top:238.00px;font-size:13px;font-weight:normal;color:#1f2429;letter-spacing:0.3px">240819.88</div>
<div class="t" style="left:630.70px;top:238.00px;font-size:13px;font-weight:normal;color:#1f2429;letter-spacing:0.3px">1992-03-19</div>
<div class="t" style="left:773.40px;top:238.00px;font-size:13px;font-weight:normal;color:#1f2429;">4-NOT SPECIFIED</div>
<div class="t" style="left:934.00px;top:238.00px;font-size:13px;font-weight:normal;color:#1f2429;letter-spacing:0.1px">Clerk#000004636</div>
<div class="t" style="left:793.60px;width:400px;text-align:right;top:238.00px;font-size:13px;font-weight:normal;color:#1f2429;">0</div>
<svg style="left:1212px;top:240px" width="6" height="9" viewBox="0 0 6 9"><path d="M1 1 L4.5 4.5 L1 8" fill="none" stroke="#6b6b6b" stroke-width="1.1"/></svg>
<div class="t" style="left:1228.00px;top:238.00px;font-size:13px;font-weight:normal;color:#1f2429;">nding packages</div>
<div class="t" style="left:-169.50px;width:400px;text-align:center;top:263.00px;font-size:13px;font-weight:normal;color:#6b6b6b;">10</div>
<div class="t" style="left:-214.50px;width:400px;text-align:right;top:263.00px;font-size:13px;font-weight:normal;color:#1f2429;letter-spacing:0.3px">5611776</div>
<div class="t" style="left:-83.00px;width:400px;text-align:right;top:263.00px;font-size:13px;font-weight:normal;color:#1f2429;letter-spacing:0.3px">615022</div>
<div class="t" style="left:334.00px;top:263.00px;font-size:13px;font-weight:normal;color:#1f2429;">F</div>
<div class="t" style="left:213.30px;width:400px;text-align:right;top:263.00px;font-size:13px;font-weight:normal;color:#1f2429;letter-spacing:0.3px">133471.94</div>
<div class="t" style="left:630.70px;top:263.00px;font-size:13px;font-weight:normal;color:#1f2429;letter-spacing:0.3px">1995-01-04</div>
<div class="t" style="left:773.40px;top:263.00px;font-size:13px;font-weight:normal;color:#1f2429;">4-NOT SPECIFIED</div>
<div class="t" style="left:934.00px;top:263.00px;font-size:13px;font-weight:normal;color:#1f2429;letter-spacing:0.1px">Clerk#000001518</div>
<div class="t" style="left:793.60px;width:400px;text-align:right;top:263.00px;font-size:13px;font-weight:normal;color:#1f2429;">0</div>
<svg style="left:1212px;top:265px" width="6" height="9" viewBox="0 0 6 9"><path d="M1 1 L4.5 4.5 L1 8" fill="none" stroke="#6b6b6b" stroke-width="1.1"/></svg>
<div class="t" style="left:1228.00px;top:263.00px;font-size:13px;font-weight:normal;color:#1f2429;">equests about</div>
<div class="t" style="left:-169.50px;width:400px;text-align:center;top:288.00px;font-size:13px;font-weight:normal;color:#6b6b6b;">11</div>
<div class="t" style="left:-214.50px;width:400px;text-align:right;top:288.00px;font-size:13px;font-weight:normal;color:#1f2429;letter-spacing:0.3px">5611844</div>
<div class="t" style="left:-83.00px;width:400px;text-align:right;top:288.00px;font-size:13px;font-weight:normal;color:#1f2429;letter-spacing:0.3px">727564</div>
<div class="t" style="left:334.00px;top:288.00px;font-size:13px;font-weight:normal;color:#1f2429;">F</div>
<div class="t" style="left:213.30px;width:400px;text-align:right;top:288.00px;font-size:13px;font-weight:normal;color:#1f2429;letter-spacing:0.3px">45158.58</div>
<div class="t" style="left:630.70px;top:288.00px;font-size:13px;font-weight:normal;color:#1f2429;letter-spacing:0.3px">1993-11-12</div>
<div class="t" style="left:773.40px;top:288.00px;font-size:13px;font-weight:normal;color:#1f2429;">2-HIGH</div>
<div class="t" style="left:934.00px;top:288.00px;font-size:13px;font-weight:normal;color:#1f2429;letter-spacing:0.1px">Clerk#000002570</div>
<div class="t" style="left:793.60px;width:400px;text-align:right;top:288.00px;font-size:13px;font-weight:normal;color:#1f2429;">0</div>
<div class="t" style="left:1211.00px;top:288.00px;font-size:13px;font-weight:normal;color:#1f2429;">quickly unusual</div>
</div>
<div class="a" style="left:-6px;top:763px;width:34px;height:40px;background:#fff;border-radius:6px;box-shadow:0 0 24px rgba(0,0,0,0.07)"></div>
<div class="a" style="left:13.8px;top:770px;width:7px;height:7px;background:#ff3322;border-radius:50%"></div>
<svg style="left:14px;top:776px" width="7" height="10" viewBox="0 0 7 10"><path d="M5.6 1 C6 4 4.5 7 1.2 8.6" fill="none" stroke="#7a7a7a" stroke-width="1"/></svg>
</body></html>
